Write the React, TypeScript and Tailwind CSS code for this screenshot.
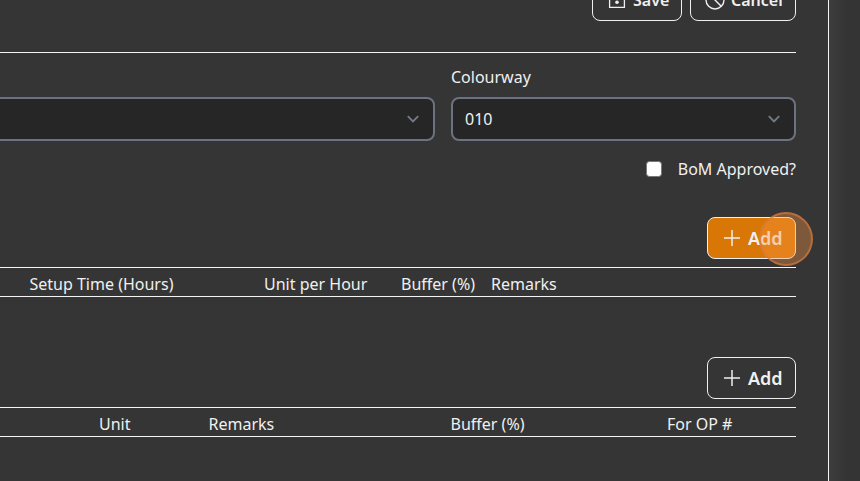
import type { ReactNode } from "react";

function OutlineButton({ children, className = "" }: { children: ReactNode; className?: string }) {
  return (
    <button
      className={`flex h-[42px] items-center rounded-lg border border-[#f0f0f0] font-semibold text-[#f0f0f0] ${className}`}
    >
      {children}
    </button>
  );
}

function SaveIcon() {
  return (
    <svg width="20" height="20" viewBox="0 0 20 20" fill="none" stroke="currentColor" strokeWidth="1.3">
      <path d="M2.6 2.6h11.5l3.3 3.3v11.5H2.6z" />
      <path d="M5.5 2.6v4h7v-4" />
      <circle cx="10" cy="12.2" r="1.8" fill="currentColor" stroke="none" />
    </svg>
  );
}

function CancelIcon() {
  return (
    <svg width="20" height="20" viewBox="0 0 20 20" fill="none" stroke="currentColor" strokeWidth="1.4">
      <circle cx="10" cy="10" r="9" />
      <path d="M3.6 3.6l12.8 12.8" />
    </svg>
  );
}

function PlusIcon() {
  return (
    <svg width="18" height="18" viewBox="0 0 18 18" fill="none" stroke="currentColor" strokeWidth="1.5">
      <path d="M9 1v16M1 9h16" />
    </svg>
  );
}

function SelectBox({ value, className = "" }: { value: string; className?: string }) {
  return (
    <div
      className={`flex h-11 items-center justify-between rounded-lg border-2 border-[#6b7280] bg-[#262626] pr-[14px] pl-3 ${className}`}
    >
      <span>{value}</span>
      <svg width="12" height="8" viewBox="0 0 12 8" fill="none" stroke="#747b88" strokeWidth="1.9">
        <path d="M.8 1.2L6 6.5l5.2-5.3" />
      </svg>
    </div>
  );
}

export default function App() {
  return (
    <div className="flex h-[481px] w-[860px] overflow-hidden bg-[#353535] font-['Noto_Sans',sans-serif] text-base text-[#f0f0f0]">
      <main className="h-full w-[829px] shrink-0 border-r border-[#f5f5f5] pr-8">
        <div className="-mt-[21px] flex h-[74px] items-start justify-end gap-2 border-b border-[#f5f5f5]">
          <OutlineButton className="w-[90px] pl-[14px] text-base">
            <SaveIcon />
            <span className="ml-[6px]">Save</span>
          </OutlineButton>
          <OutlineButton className="w-[106px] pl-[14px] text-base">
            <CancelIcon />
            <span className="ml-[6px]">Cancel</span>
          </OutlineButton>
        </div>

        <div className="flex items-end gap-4 pt-3">
          <SelectBox value="" className="-ml-3 w-[447px]" />
          <label className="flex w-[345px] flex-col gap-2">
            <span>Colourway</span>
            <SelectBox value="010" />
          </label>
        </div>

        <label className="mt-4 flex items-center justify-end gap-4">
          <span className="h-4 w-4 rounded-[3.5px] border border-[#777] bg-white" />
          <span>BoM Approved?</span>
        </label>

        <div className="mt-9 flex justify-end">
          <div className="relative">
            <OutlineButton className="w-[89px] bg-[#d97706] pl-[15px] text-lg">
              <PlusIcon />
              <span className="ml-[7px]">Add</span>
            </OutlineButton>
            <span className="absolute -top-[5.5px] left-[51.5px] h-[54.5px] w-[54.5px] rounded-full border-2 border-[#d27a3aaa] bg-[#fb94455e]" />
          </div>
        </div>
        <div className="mt-2 flex h-[30px] items-center border-y border-[#f5f5f5] pt-1 whitespace-nowrap">
          <span className="ml-[29.5px] w-[234.5px]">Setup Time (Hours)</span>
          <span className="w-[137px]">Unit per Hour</span>
          <span className="w-[90px]">Buffer (%)</span>
          <span>Remarks</span>
        </div>

        <div className="mt-[60px] flex justify-end">
          <OutlineButton className="w-[89px] pl-[15px] text-lg">
            <PlusIcon />
            <span className="ml-[7px]">Add</span>
          </OutlineButton>
        </div>
        <div className="mt-2 flex h-[30px] items-center border-y border-[#f5f5f5] pt-1 whitespace-nowrap">
          <span className="ml-[99px] w-[109.5px]">Unit</span>
          <span className="w-[242px]">Remarks</span>
          <span className="w-[216.5px]">Buffer (%)</span>
          <span>For OP #</span>
        </div>
      </main>
      <div className="grow bg-gradient-to-r from-[#3d3d3d] to-[#343434] to-60%" />
    </div>
  );
}
